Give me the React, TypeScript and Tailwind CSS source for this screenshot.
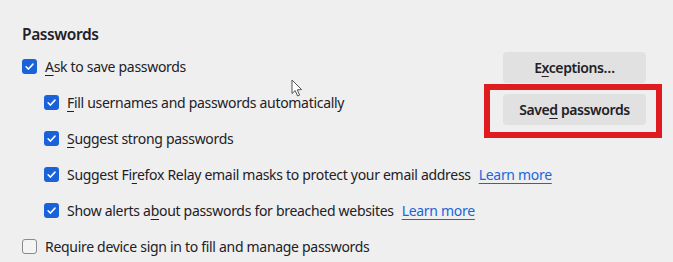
import React from "react";

const font = { fontFamily: '"Noto Sans", "Open Sans", sans-serif' };

function Check({ checked }: { checked: boolean }) {
  if (checked) {
    return (
      <span className="flex h-[15px] w-[15px] shrink-0 items-center justify-center rounded-[3px] bg-[#1a62d8]">
        <svg width="11" height="11" viewBox="0 0 12 12" fill="none">
          <path d="M2.3 6.3 L4.9 8.8 L9.8 3.4" stroke="white" strokeWidth="1.7" strokeLinecap="round" strokeLinejoin="round" />
        </svg>
      </span>
    );
  }
  return <span className="h-[15px] w-[15px] shrink-0 rounded-[3px] border-[1.5px] border-[#8a8a8e] bg-[#f4f4f4]" />;
}

function Row({
  checked,
  indent,
  children,
}: {
  checked: boolean;
  indent?: boolean;
  children: React.ReactNode;
}) {
  return (
    <div className={`flex h-[36px] items-center gap-[8px] ${indent ? "pl-[22px]" : ""}`}>
      <Check checked={checked} />
      <span className="whitespace-nowrap">{children}</span>
    </div>
  );
}

function Link() {
  return <span className="ml-[8px] text-[#1a66d8] underline underline-offset-[3px]">Learn more</span>;
}

export default function App() {
  return (
    <div
      style={font}
      className="relative h-[262px] w-[673px] overflow-hidden bg-[#efefef] pl-[22px] pt-[22px] text-[14px] tracking-[-0.3px] text-[#222126]"
    >
      <div className="h-[24px] text-[15.5px] font-semibold leading-[24px] tracking-[-0.4px]">Passwords</div>
      <div className="mt-[2px] flex">
        <div className="flex flex-col">
          <Row checked>
            <u className="underline-offset-[3px]">A</u>sk to save passwords
          </Row>
          <Row checked indent>
            <u className="underline-offset-[3px]">F</u>ill usernames and passwords automatically
          </Row>
          <Row checked indent>
            <u className="underline-offset-[3px]">S</u>uggest strong passwords
          </Row>
        </div>
        <div className="ml-auto mr-[27px] flex flex-col gap-[11px] pt-[4px]">
          <button className="h-[31px] w-[143px] rounded-[4px] bg-[#e1e1e1] text-[14px] font-semibold tracking-[-0.4px] text-[#222126]">
            E<u className="underline-offset-[3px]">x</u>ceptions…
          </button>
          <button className="h-[31px] w-[143px] rounded-[4px] bg-[#e1e1e1] text-[14px] font-semibold tracking-[-0.4px] text-[#222126]">
            Save<u className="underline-offset-[3px]">d</u> passwords
          </button>
        </div>
      </div>
      <div className="flex flex-col">
        <Row checked indent>
          Suggest Fi<u className="underline-offset-[3px]">r</u>efox Relay email masks to protect your email address
          <Link />
        </Row>
        <Row checked indent>
          Show alerts a<u className="underline-offset-[3px]">b</u>out passwords for breached websites
          <Link />
        </Row>
        <Row checked={false}>Require device sign in to fill and manage passwords</Row>
      </div>

      <div className="pointer-events-none absolute left-[484px] top-[84px] h-[54px] w-[178px] border-[6px] border-[#e01b1f]" />

      <svg className="pointer-events-none absolute left-[291px] top-[79px]" width="13" height="19" viewBox="0 0 13 19">
        <path
          d="M1 1 L1 14.5 L4.2 11.6 L6.6 17 L8.6 16.1 L6.3 10.8 L10.6 10.6 Z"
          fill="white"
          stroke="#555"
          strokeWidth="1"
          strokeLinejoin="round"
        />
      </svg>
    </div>
  );
}
